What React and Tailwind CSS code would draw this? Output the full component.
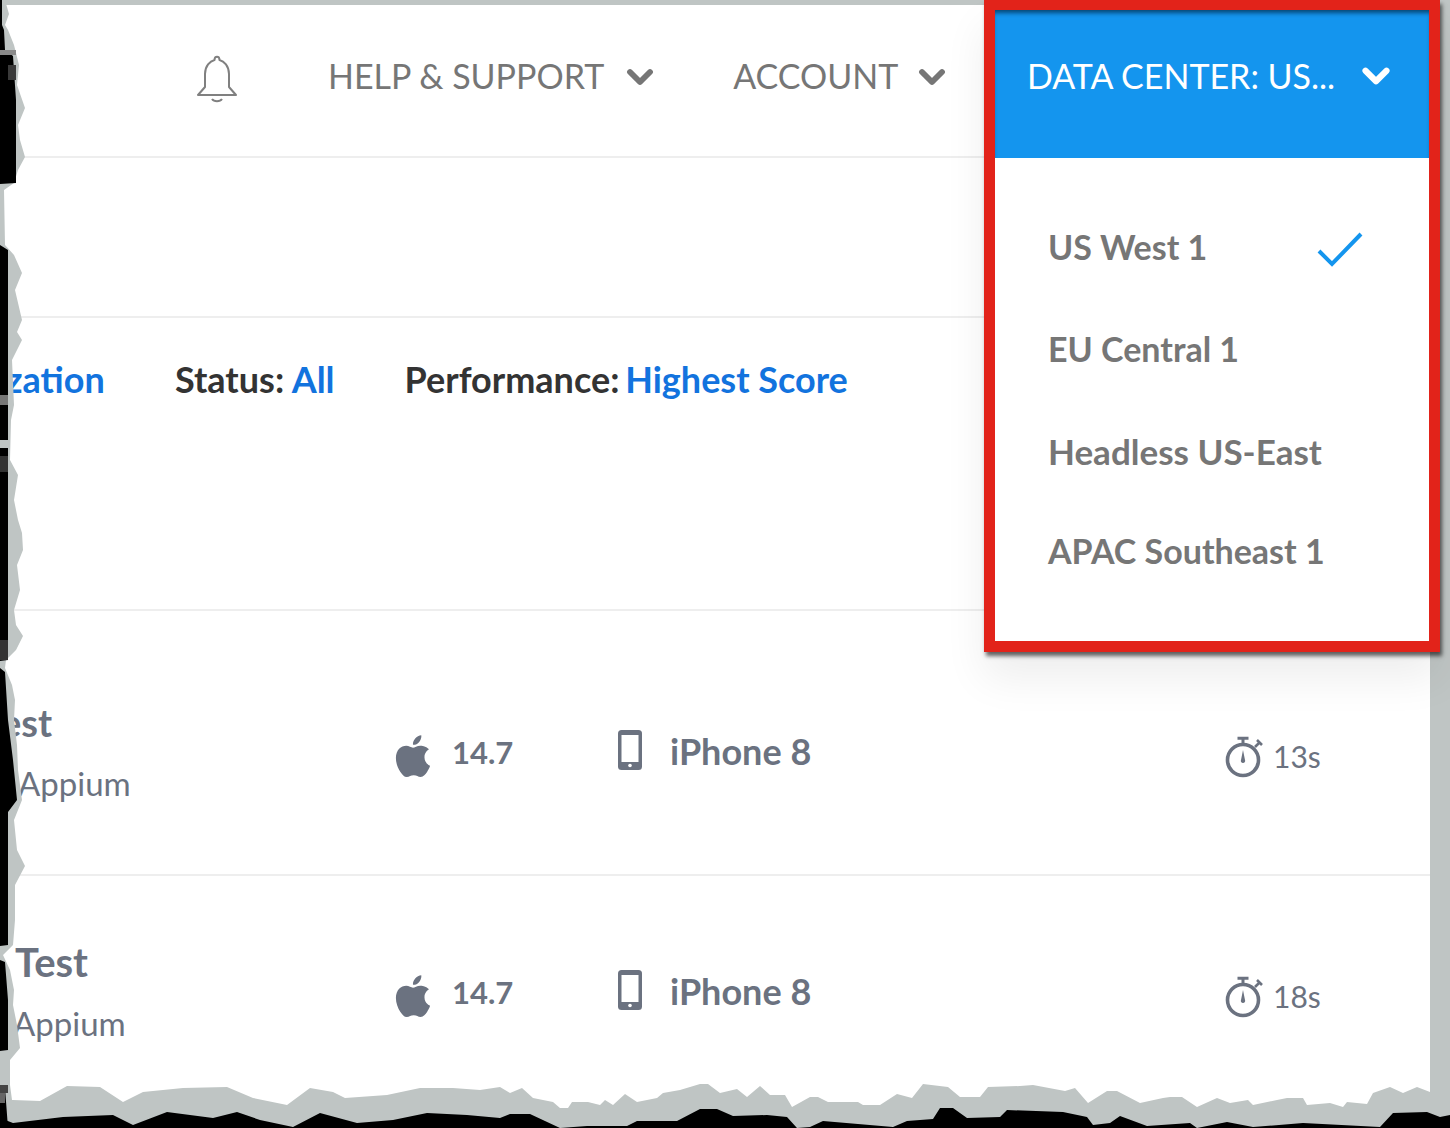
import React from 'react';
import { ChevronDown } from 'lucide-react';

const FONT = "font-['Lato','Open_Sans',sans-serif]";

// torn paper outline, read off the reference. left side is [y, x], bottom side is [x, y]
const leftBlack = [[0,2],[25,2],[30,4],[50,5],[56,13],[100,16],[183,16],[184,0],[245,0],[250,8],[370,8],[374,8],[660,8],[661,0],[668,0],[672,5],[720,8],[760,13],[800,17],[812,8],[945,8],[946,0],[960,0],[962,5],[1000,8],[1050,8],[1051,0],[1085,0],[1088,5],[1128,8]];
const leftGray = [[0,5],[14,9],[25,5],[30,8],[45,14],[65,19],[85,17],[108,25],[125,18],[140,20],[157,25],[170,18],[183,14],[190,4],[245,5],[255,14],[273,22],[290,15],[320,22],[332,17],[340,22],[360,12],[405,14],[420,11],[460,10],[475,18],[500,14],[520,18],[533,22],[550,23],[565,17],[590,20],[610,14],[625,16],[636,23],[650,16],[660,6],[668,5],[685,12],[700,15],[720,14],[745,17],[770,18],[800,22],[820,14],[850,17],[866,25],[885,15],[920,15],[945,13],[955,3],[970,10],[990,14],[1005,13],[1025,17],[1048,20],[1060,10],[1085,10],[1100,12]];
const bottomGray = [[0,1100],[13,1100],[40,1101],[67,1086],[100,1087],[123,1102],[143,1092],[183,1088],[227,1087],[253,1098],[287,1105],[310,1088],[333,1092],[345,1098],[387,1095],[420,1088],[453,1088],[480,1090],[500,1087],[510,1093],[522,1088],[533,1098],[553,1102],[560,1108],[568,1108],[572,1102],[588,1102],[600,1105],[605,1100],[613,1105],[625,1094],[637,1102],[657,1098],[663,1093],[680,1090],[700,1084],[708,1084],[720,1093],[737,1089],[747,1097],[760,1086],[770,1095],[785,1095],[792,1107],[810,1097],[818,1097],[828,1102],[858,1102],[863,1105],[880,1105],[897,1094],[912,1098],[923,1084],[948,1087],[960,1097],[980,1097],[988,1087],[1020,1086],[1033,1085],[1065,1091],[1075,1088],[1088,1103],[1107,1091],[1117,1091],[1140,1103],[1163,1098],[1170,1097],[1182,1097],[1197,1107],[1217,1098],[1230,1103],[1248,1100],[1253,1105],[1277,1100],[1287,1098],[1303,1098],[1307,1105],[1330,1103],[1343,1107],[1347,1102],[1367,1104],[1373,1093],[1390,1087],[1403,1093],[1417,1087],[1430,1092],[1450,1092]];
const bottomBlack = [[0,1118],[13,1123],[63,1117],[113,1115],[133,1125],[167,1112],[213,1118],[237,1112],[260,1120],[293,1127],[320,1113],[357,1123],[393,1120],[427,1113],[467,1115],[500,1118],[510,1114],[530,1114],[560,1128],[587,1126],[627,1126],[637,1121],[677,1121],[700,1109],[717,1109],[733,1116],[767,1115],[787,1117],[797,1128],[810,1127],[823,1121],[893,1127],[907,1121],[933,1119],[940,1108],[953,1108],[967,1118],[1000,1117],[1007,1110],[1063,1112],[1087,1117],[1093,1125],[1110,1123],[1120,1116],[1147,1126],[1190,1123],[1197,1128],[1227,1122],[1253,1127],[1303,1123],[1380,1127],[1393,1113],[1427,1112],[1440,1117],[1450,1115]];
// soft grey blocks inside the black, [x, y, w, h, fill]
const blocks = [[0,50,16,5,'#8a8a8a'],[8,65,8,15,'#3a3a3a'],[0,395,8,10,'#777777'],[0,440,8,8,'#bfc5c4'],[0,456,8,16,'#333333'],[0,640,8,20,'#333333'],[0,1085,8,8,'#444444'],[0,1093,5,10,'#666666']];

const pts = (list) => list.map(([a, b]) => `${a},${b}`).join(' ');

const TornEdges = () => (
  <svg className="absolute inset-0 pointer-events-none" width="1450" height="1128" viewBox="0 0 1450 1128">
    <polygon fill="#bfc5c4" points={`0,0 ${pts(leftGray.map(([y, x]) => [x, y]))} 0,1128`} />
    <polygon fill="#bfc5c4" points={`0,1128 ${pts(bottomGray)} 1450,1128`} />
    <polygon fill="#000000" points={`0,0 ${pts(leftBlack.map(([y, x]) => [x, y]))} 0,1128`} />
    <polygon fill="#000000" points={`0,1128 ${pts(bottomBlack)} 1450,1128`} />
    {blocks.map(([x, y, w, h, fill], i) => (
      <rect key={i} x={x} y={y} width={w} height={h} fill={fill} />
    ))}
  </svg>
);

const Bell = () => (
  <svg width="42" height="50" viewBox="0 0 42 50" fill="none" stroke="#808080" strokeWidth="2" className="shrink-0">
    <path d="M2 41 L9 33 V20 C9 12 14 7 18.5 6 C18.5 1.5 23.5 1.5 23.5 6 C28 7 33 12 33 20 V33 L40 41 Z" strokeLinejoin="round" />
    <path d="M16 45 C18 48 24 48 26 45" />
  </svg>
);

const Apple = () => (
  <svg width="36" height="42" viewBox="0 0 814 1000" fill="#6b7280" className="shrink-0">
    <path d="M788 341c-6 4-108 62-108 190 0 148 130 201 134 202-1 3-21 72-69 142-43 62-88 124-156 124s-86-40-164-40c-76 0-104 41-166 41s-106-57-156-127C45 791 0 667 0 549c0-190 124-291 246-291 65 0 119 43 160 43 39 0 100-46 174-46 28 0 129 3 208 86zM554 164c31-36 52-87 52-137 0-7-1-14-2-20-50 2-109 33-145 75-28 32-54 83-54 134 0 8 1 15 2 18 3 1 8 1 13 1 45 0 102-30 134-71z" />
  </svg>
);

const Phone = () => (
  <svg width="26" height="40" viewBox="0 0 26 40" className="shrink-0">
    <rect x="1" y="0" width="24" height="40" rx="3.5" fill="#6b7280" />
    <rect x="4.5" y="5" width="17" height="27" fill="#ffffff" />
    <circle cx="13" cy="35.5" r="1.8" fill="#ffffff" />
  </svg>
);

const Timer = () => (
  <svg width="38" height="42" viewBox="0 0 38 42" fill="none" stroke="#6b7280" className="shrink-0">
    <circle cx="18" cy="24" r="15.5" strokeWidth="3.6" />
    <path d="M12.5 2.2 H23.5 M18 2 V8" strokeWidth="3" />
    <path d="M30 11 L35 6 M32 4 L37 9" strokeWidth="2.6" />
    <path d="M18 14 L16 24 A2.2 2.2 0 1 0 20 24 Z" fill="#6b7280" stroke="none" />
  </svg>
);

const Check = () => (
  <svg width="46" height="36" viewBox="0 0 46 36" fill="none" stroke="#1495ee" strokeWidth="4" className="mt-[7px]">
    <path d="M2 19 L15 32 L44 2" />
  </svg>
);

const TestRow = ({ name, nameClass, frameworkClass, time, rowClass }) => (
  <div className={`${rowClass} border-b-2 border-[#eeeeee] flex`}>
    <div className="w-[395px] shrink-0 pt-[64px]">
      <div className={`${nameClass} leading-[44px] font-bold text-[#6b7280]`}>{name}</div>
      <div className={`${frameworkClass} mt-[19px] text-[33px] leading-[40px] text-[#6b7280]`}>Appium</div>
    </div>
    <div className="w-[222px] shrink-0 pt-[99px] flex items-start gap-[21px]">
      <Apple />
      <span className="text-[31px] leading-[40px] font-bold text-[#6b7280] -mt-[3px]">14.7</span>
    </div>
    <div className="flex-1 pt-[94px] flex items-start gap-[27px]">
      <Phone />
      <span className="text-[36px] leading-[40px] font-bold text-[#6b7280] mt-[1px]">iPhone 8</span>
    </div>
    <div className="w-[205px] shrink-0 pt-[100px] flex items-start gap-[10px]">
      <Timer />
      <span className="text-[30px] leading-[40px] text-[#6b7280]">{time}</span>
    </div>
  </div>
);

export default function App() {
  return (
    <div className={`${FONT} relative w-[1450px] h-[1128px] overflow-hidden bg-[#bfc5c4]`}>
      <div className="mt-[5px] w-[1430px] h-[1123px] bg-white">
        {/* top nav */}
        <div className="h-[153px] border-b-2 border-[#eeeeee] flex items-center pl-[196px] pb-[3px]">
          <Bell />
          <span className="ml-[90px] -mt-[8px] text-[34px] text-[#767676]">HELP &amp; SUPPORT</span>
          <ChevronDown size={40} strokeWidth={3.5} className="ml-[16px] -mt-[4px] text-[#767676]" />
          <span className="ml-[73px] -mt-[8px] text-[34px] text-[#767676]">ACCOUNT</span>
          <ChevronDown size={40} strokeWidth={3.5} className="ml-[14px] -mt-[4px] text-[#767676]" />
        </div>

        <div className="h-[160px] border-b-2 border-[#eeeeee]" />

        {/* filters */}
        <div className="h-[293px] border-b-2 border-[#eeeeee] pt-[40px] flex text-[36px] leading-[42px] font-bold">
          <span className="ml-[6px] w-[169px] text-[#1273de]">zation</span>
          <span className="text-[#333333]">Status: <span className="text-[#1273de]">All</span></span>
          <span className="ml-[70px] text-[#333333]">Performance: <span className="-ml-[3px] text-[#1273de]">Highest Score</span></span>
        </div>

        <TestRow rowClass="h-[265px] pt-[25px]" name="est" nameClass="ml-[1px] text-[38px]" frameworkClass="ml-[18px]" time="13s" />
        <TestRow rowClass="h-[240px]" name="Test" nameClass="ml-[15px] text-[40px]" frameworkClass="ml-[13px]" time="18s" />
      </div>

      <TornEdges />

      {/* data center dropdown, outlined in red */}
      <div className="absolute left-[984px] top-0 w-[456px] h-[652px] border-[11px] border-t-[10px] border-[#e2231a] shadow-[2px_4px_4px_rgba(0,0,0,0.6),0_26px_40px_rgba(0,0,0,0.07)] bg-white">
        <div className="h-[148px] bg-[#1495ee] flex items-center justify-between pl-[32px] pr-[32px] pb-[17px] text-white shadow-[inset_0_5px_4px_-2px_rgba(0,40,70,0.7)]">
          <span className="text-[34px]">DATA CENTER: US...</span>
          <ChevronDown size={42} strokeWidth={3.5} />
        </div>
        <div className="pl-[53px] pr-[66px] pt-[67px] text-[34px] leading-[42px] font-bold text-[#767676] flex flex-col gap-[60px]">
          <div className="flex items-center justify-between">
            <span>US West 1</span>
            <Check />
          </div>
          <span>EU Central 1</span>
          <span className="text-[35px]">Headless US-East</span>
          <span className="-mt-[2px]">APAC Southeast 1</span>
        </div>
      </div>
    </div>
  );
}
